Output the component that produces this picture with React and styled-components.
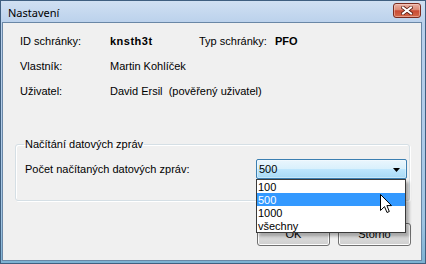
import React from "react";
import styled, { createGlobalStyle } from "styled-components";

const GlobalStyle = createGlobalStyle`
  html, body { margin: 0; padding: 0; }
  body {
    width: 426px; height: 264px; overflow: hidden; background: #fff;
    font-family: "Liberation Sans", Arial, sans-serif;
  }
`;

const Window = styled.div`
  box-sizing: border-box;
  width: 426px;
  height: 264px;
  border: 1px solid #3f5f80;
  background: linear-gradient(180deg, #d0e0f2 0%, #b9d0eb 9%, #b0cbe8 50%, #9fc4e2 85%, #7cb1d2 100%);
  display: flex;
  flex-direction: column;
`;

const TitleBar = styled.div`
  height: 21px;
  display: flex;
  align-items: flex-start;
  padding: 0 4px 0 7px;
`;

const TitleText = styled.div`
  font-family: "Noto Sans", "Open Sans", sans-serif;
  font-size: 11px;
  line-height: 15px;
  padding-top: 4px;
  color: #000;
`;

const CloseButton = styled.div`
  box-sizing: border-box;
  margin: 2px 0 0 auto;
  width: 28px;
  height: 15px;
  border: 1px solid #7a2b1f;
  border-radius: 3px;
  background: linear-gradient(180deg, #eab2a4 0%, #dc8a76 45%, #c94a33 52%, #d46a4a 100%);
  box-shadow: inset 0 0 0 1px rgba(255, 220, 210, 0.45);
  display: flex;
  align-items: center;
  justify-content: center;
`;

const Client = styled.div`
  flex: 1;
  margin: 0 3px 2px 1px;
  border: 1px solid #6a87a6;
  background: #f0f0f0;
  position: relative;
  display: flex;
  flex-direction: column;
  font-size: 11px;
  color: #000;
`;

const InfoGrid = styled.div`
  margin: 6px 0 0 17px;
  display: grid;
  grid-template-columns: 90px 89px 76px auto;
  grid-auto-rows: 25px;
  line-height: 25px;
`;

const Value = styled.div`
  grid-column: ${(p) => (p.$wide ? "2 / 5" : "auto")};
  font-weight: ${(p) => (p.$bold ? 700 : 400)};
  letter-spacing: ${(p) => (p.$spaced ? "0.5px" : "0")};
  white-space: nowrap;
`;

const GroupBox = styled.fieldset`
  box-sizing: border-box;
  width: 395px;
  min-width: 0;
  margin: 34px 0 0 12px;
  padding: 0 2px 21px 9px;
  border: 1px solid #d5dfe5;
  border-radius: 3px;
  box-shadow: inset 1px 1px 0 #fff, 1px 1px 0 #fff;
`;

const Legend = styled.legend`
  padding: 0 1px;
  margin-left: -1px;
  line-height: 12px;
  font-size: 11px;
`;

const FieldRow = styled.div`
  display: flex;
  align-items: center;
  margin-top: 9px;
`;

const Label = styled.div`
  line-height: 13px;
  padding-top: 1px;
`;

const Combo = styled.div`
  box-sizing: border-box;
  margin-left: auto;
  width: 151px;
  height: 20px;
  border: 1px solid #3c7fb1;
  border-radius: 2px;
  background: linear-gradient(180deg, #eaf6fd 0%, #d9f0fc 48%, #bee6fd 52%, #a7d9f5 100%);
  box-shadow: inset 0 0 0 1px rgba(255, 255, 255, 0.35);
  display: flex;
  align-items: center;
  padding: 1px 6px 0 2px;
  line-height: 13px;
`;

const ComboText = styled.span`
  flex: 1;
`;

const ButtonRow = styled.div`
  display: flex;
  justify-content: flex-end;
  gap: 8px;
  margin: 22px 10px 0 0;
`;

const Button = styled.div`
  box-sizing: border-box;
  width: 73px;
  height: 23px;
  border: 1px solid #707070;
  border-radius: 3px;
  background: linear-gradient(180deg, #f2f2f2 0%, #ebebeb 48%, #dddddd 52%, #cfcfcf 100%);
  box-shadow: inset 0 0 0 1px #fcfcfc;
  display: flex;
  align-items: center;
  justify-content: center;
  line-height: 13px;
`;

const DropList = styled.div`
  position: absolute;
  left: 253px;
  top: 156px;
  box-sizing: border-box;
  width: 150px;
  border: 1px solid #3a3a3a;
  background: #fff;
  box-shadow: 3px 3px 3px rgba(0, 0, 0, 0.3);
`;

const Option = styled.div`
  height: 13px;
  line-height: 14px;
  padding-left: 1px;
  background: ${(p) => (p.$selected ? "#3399ff" : "transparent")};
  color: ${(p) => (p.$selected ? "#fff" : "#000")};
  white-space: nowrap;
`;

const Cursor = styled.svg`
  position: absolute;
  left: 377px;
  top: 171px;
`;

export default function App() {
  const options = ["100", "500", "1000", "všechny"];
  return (
    <>
      <GlobalStyle />
      <Window>
        <TitleBar>
          <TitleText>Nastavení</TitleText>
          <CloseButton>
            <svg width="12" height="9" viewBox="0 0 12 9">
              <path d="M2 1.5 L10 7.5 M10 1.5 L2 7.5" stroke="#5b1d12" strokeWidth="3.6" strokeLinecap="square" />
              <path d="M2 1.5 L10 7.5 M10 1.5 L2 7.5" stroke="#fff" strokeWidth="2" strokeLinecap="square" />
            </svg>
          </CloseButton>
        </TitleBar>
        <Client>
          <InfoGrid>
            <div>ID schránky:</div>
            <Value $bold $spaced>knsth3t</Value>
            <div>Typ schránky:</div>
            <Value $bold>PFO</Value>
            <div>Vlastník:</div>
            <Value $wide>Martin Kohlíček</Value>
            <div>Uživatel:</div>
            <Value $wide>David Ersil&nbsp; (pověřený uživatel)</Value>
          </InfoGrid>
          <GroupBox>
            <Legend>Načítání datových zpráv</Legend>
            <FieldRow>
              <Label>Počet načítaných datových zpráv:</Label>
              <Combo>
                <ComboText>500</ComboText>
                <svg width="7" height="4" viewBox="0 0 7 4">
                  <path d="M0 0 H7 L3.5 4 Z" fill="#000" />
                </svg>
              </Combo>
            </FieldRow>
          </GroupBox>
          <ButtonRow>
            <Button>OK</Button>
            <Button>Storno</Button>
          </ButtonRow>
          <DropList>
            {options.map((o) => (
              <Option key={o} $selected={o === "500"}>{o}</Option>
            ))}
          </DropList>
          <Cursor width="12" height="19" viewBox="0 0 12 19">
            <path d="M0.5 0.5 L0.5 16.5 L4.5 12.6 L7 18.5 L9.3 17.5 L6.9 11.6 L11.5 11.6 Z" fill="#fff" stroke="#000" strokeWidth="1" strokeLinejoin="miter" />
          </Cursor>
        </Client>
      </Window>
    </>
  );
}
